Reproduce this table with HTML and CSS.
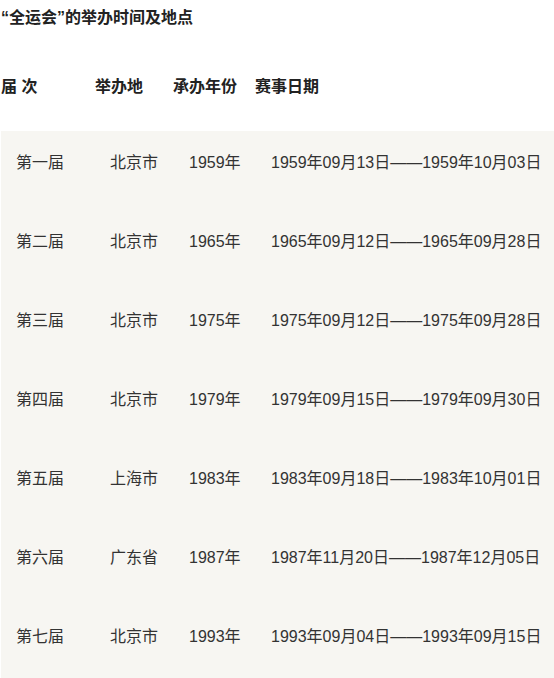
FILE: index.html
```html
<!DOCTYPE html>
<html lang="zh-CN">
<head>
<meta charset="utf-8">
<title>全运会举办时间及地点</title>
<link rel="stylesheet" href="styles.css">
</head>
<body>
<div class="page">
  <h2 class="title">“全运会”的举办时间及地点</h2>
  <div class="row head">
    <span>届 次</span><span>举办地</span><span>承办年份</span><span>赛事日期</span>
  </div>
  <div class="list">
    <div class="row"><span>第一届</span><span>北京市</span><span>1959年</span><span>1959年09月13日——1959年10月03日</span></div>
    <div class="row"><span>第二届</span><span>北京市</span><span>1965年</span><span>1965年09月12日——1965年09月28日</span></div>
    <div class="row"><span>第三届</span><span>北京市</span><span>1975年</span><span>1975年09月12日——1975年09月28日</span></div>
    <div class="row"><span>第四届</span><span>北京市</span><span>1979年</span><span>1979年09月15日——1979年09月30日</span></div>
    <div class="row"><span>第五届</span><span>上海市</span><span>1983年</span><span>1983年09月18日——1983年10月01日</span></div>
    <div class="row"><span>第六届</span><span>广东省</span><span>1987年</span><span>1987年11月20日——1987年12月05日</span></div>
    <div class="row"><span>第七届</span><span>北京市</span><span>1993年</span><span>1993年09月04日——1993年09月15日</span></div>
  </div>
</div>
</body>
</html>
```
FILE: styles.css
```css
html, body {
  margin: 0;
  padding: 0;
  background: #fff;
}
body {
  font-family: "Liberation Sans", "Noto Sans CJK SC", sans-serif;
  font-size: 16px;
  line-height: 22px;
  color: #333;
}
.page {
  padding: 7px 0 0 1px;
}
.title {
  margin: 0;
  font-size: 16px;
  line-height: 22px;
  font-weight: bold;
  color: #222;
}
.row {
  display: grid;
  grid-template-columns: 94px 79px 82px auto;
  white-space: nowrap;
}
.head {
  margin-top: 47px;
  font-weight: bold;
  color: #222;
  grid-template-columns: 94px 78px 82px auto;
}
.list {
  margin-top: 33px;
  background: #f7f6f2;
  padding-left: 15px;
}
.list .row {
  padding: 21px 0 36px;
}
```
